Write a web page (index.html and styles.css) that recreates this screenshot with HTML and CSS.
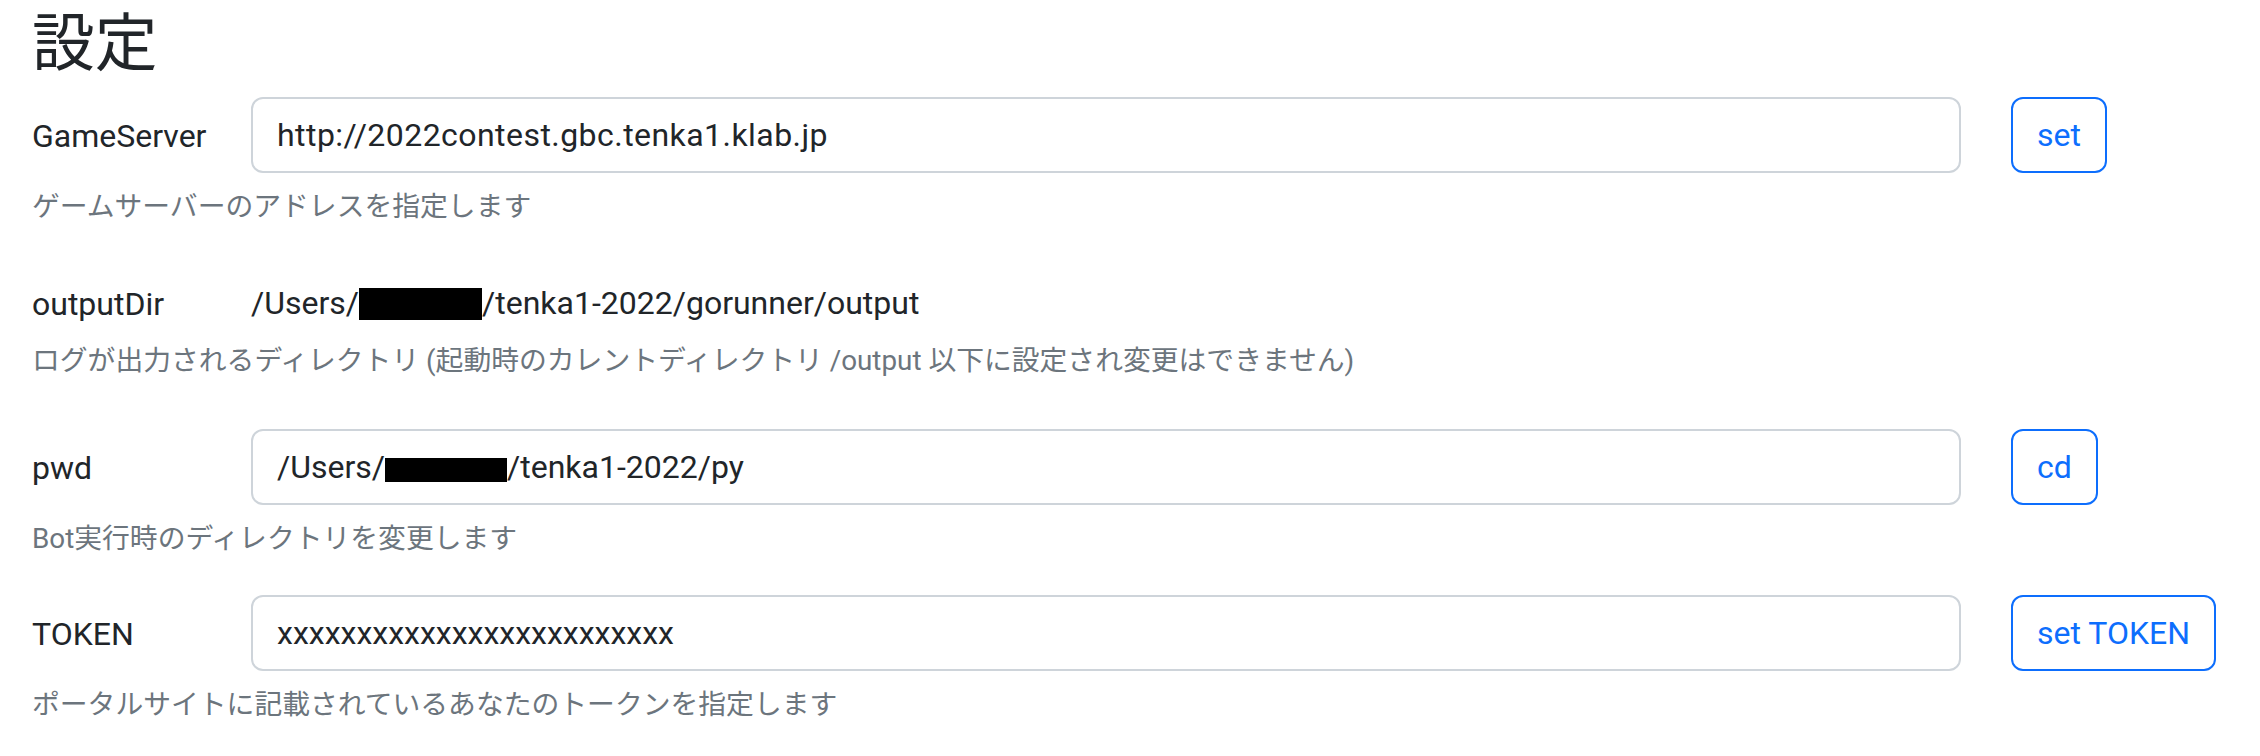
FILE: index.html
```html
<!DOCTYPE html>
<html lang="ja">
<head>
<meta charset="utf-8">
<title>設定</title>
<link rel="stylesheet" href="styles.css">
</head>
<body>
<main class="page">
  <h2 class="title">設定</h2>

  <section class="field field-server">
    <div class="field-row">
      <label class="field-label" for="server">GameServer</label>
      <input id="server" class="form-control form-control-url" type="text" value="http://2022contest.gbc.tenka1.klab.jp">
      <button class="btn" type="button">set</button>
    </div>
    <div class="help">ゲームサーバーのアドレスを指定します</div>
  </section>

  <section class="field field-output">
    <div class="field-row plain">
      <span class="field-label">outputDir</span>
      <span class="plain-value">/Users/<span class="redact redact-a"></span>/tenka1-2022/gorunner/output</span>
    </div>
    <div class="help">ログが出力されるディレクトリ (起動時のカレントディレクトリ /output 以下に設定され変更はできません)</div>
  </section>

  <section class="field field-pwd">
    <div class="field-row">
      <span class="field-label">pwd</span>
      <div class="form-control">/Users/<span class="redact redact-b"></span>/tenka1-2022/py</div>
      <button class="btn" type="button">cd</button>
    </div>
    <div class="help">Bot実行時のディレクトリを変更します</div>
  </section>

  <section class="field field-token">
    <div class="field-row">
      <label class="field-label" for="token">TOKEN</label>
      <input id="token" class="form-control" type="text" value="xxxxxxxxxxxxxxxxxxxxxxxxx">
      <button class="btn" type="button">set TOKEN</button>
    </div>
    <div class="help">ポータルサイトに記載されているあなたのトークンを指定します</div>
  </section>
</main>
</body>
</html>
```

FILE: styles.css
```css
html, body {
  margin: 0;
  padding: 0;
  background: #ffffff;
}

body {
  font-family: Roboto, "Noto Sans CJK JP", sans-serif;
  font-size: 32px;
  line-height: 48px;
  color: #212529;
}

.page {
  padding: 0 32px;
}

.title {
  font-family: "Noto Sans CJK JP", sans-serif;
  font-weight: 400;
  font-size: 62.7px;
  line-height: 75px;
  height: 75px;
  margin: 0 0 22px;
  color: #212529;
}

.field-row {
  display: flex;
  align-items: center;
  height: 76px;
}

.field-row.plain {
  height: 48px;
}

.field-label {
  flex: 0 0 219px;
  padding-top: 2px;
}

.form-control {
  box-sizing: border-box;
  flex: 0 0 1710px;
  width: 1710px;
  height: 76px;
  margin: 0;
  padding: 0 24px;
  border: 2px solid #ced4da;
  border-radius: 12px;
  background: #ffffff;
  font-family: inherit;
  font-size: 32px;
  line-height: 72px;
  color: #212529;
  outline: none;
  white-space: nowrap;
}

.form-control-url {
  letter-spacing: 0.45px;
}

.btn {
  box-sizing: border-box;
  height: 76px;
  margin: 0 0 0 50px;
  padding: 0 24px;
  border: 2px solid #0d6efd;
  border-radius: 12px;
  background: transparent;
  font-family: inherit;
  font-size: 32px;
  line-height: 48px;
  color: #0d6efd;
}

.redact {
  display: inline-block;
  background: #000000;
}

.redact-a {
  width: 123px;
  height: 32px;
  vertical-align: -6px;
}

.redact-b {
  width: 122px;
  height: 24px;
  vertical-align: -4px;
}

.help {
  margin-top: 13px;
  height: 42px;
  font-size: 27.8px;
  line-height: 42px;
  color: #6c757d;
  white-space: nowrap;
}

.field-server {
  margin-bottom: 51px;
}

.field-output {
  margin-bottom: 47px;
}

.field-pwd {
  margin-bottom: 35px;
}
```
